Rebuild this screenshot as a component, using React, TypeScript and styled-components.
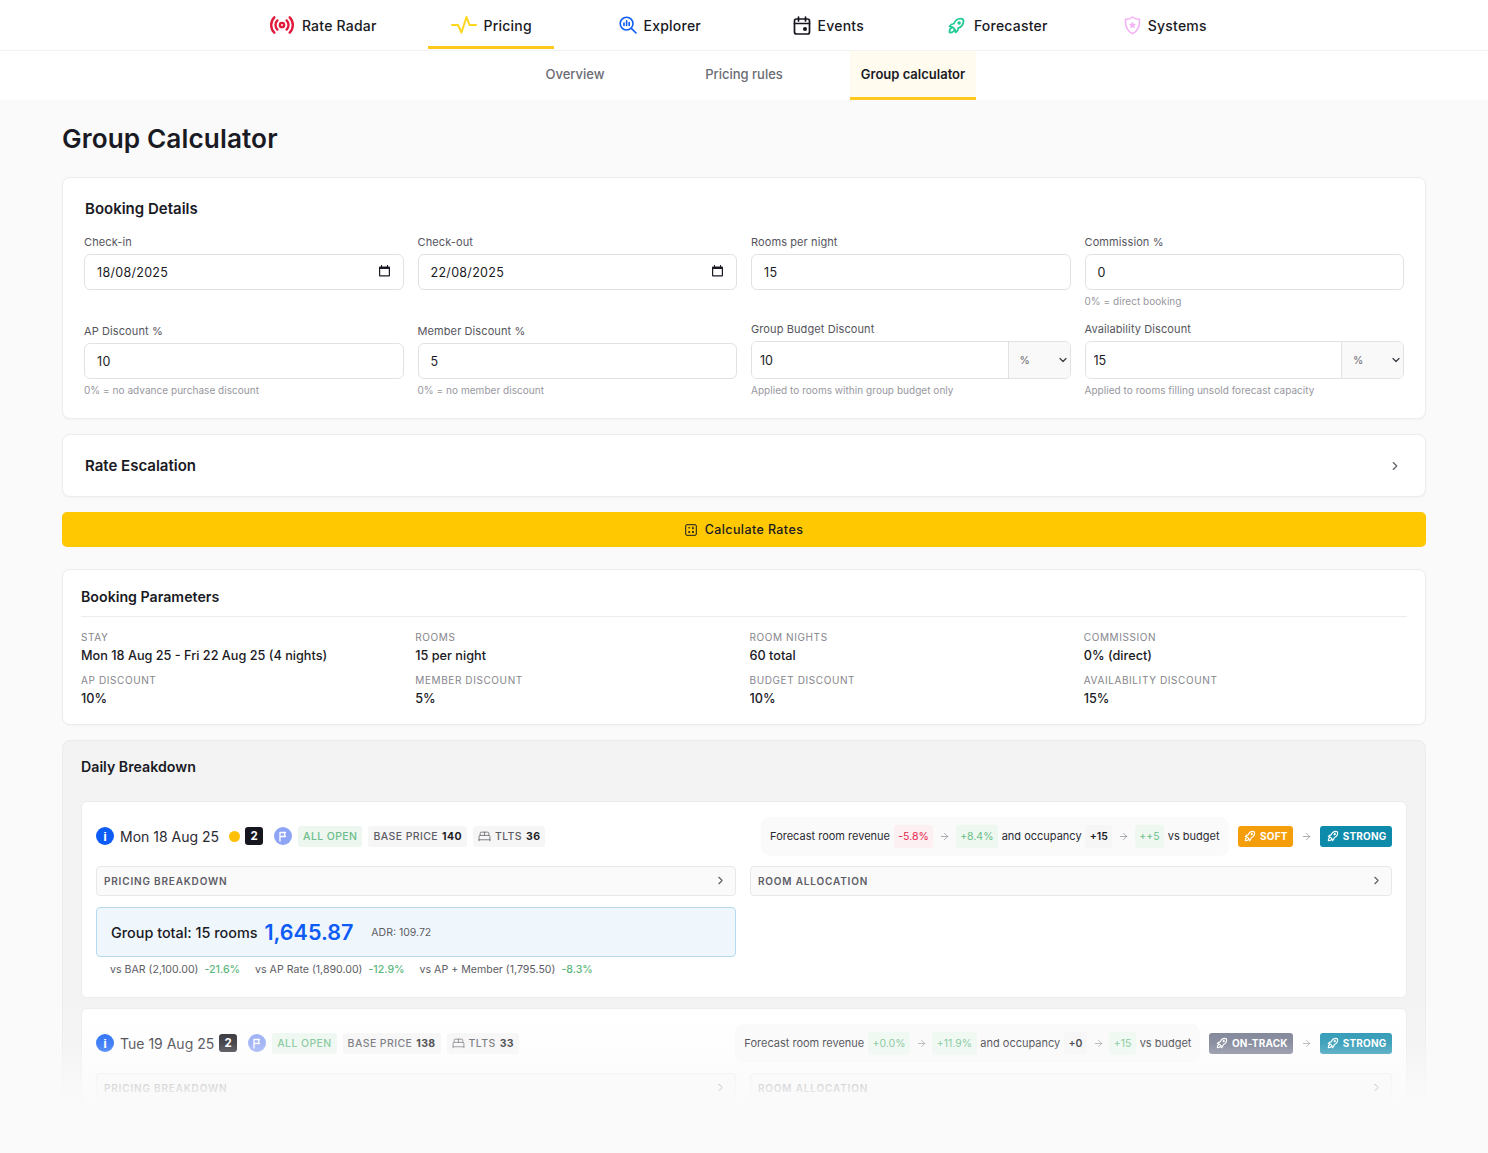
import React from "react";
import styled, { createGlobalStyle } from "styled-components";
import { ChevronRight, ArrowRight, Radio, BedDouble, ChevronDown } from "lucide-react";
import { TbRocket } from "react-icons/tb";

const Global = createGlobalStyle`
  html, body { margin: 0; padding: 0; background: #fafafa; }
  * { box-sizing: border-box; }
  body { font-family: Inter, "Noto Sans", sans-serif; color: #1a1a24; }
`;

const Viewport = styled.div`
  position: relative;
  height: 1153px;
  overflow: hidden;
  background: #fafafa;
`;
const Clip = styled.div`
  position: relative;
  height: 1105px;
  overflow: hidden;
`;
const Fade = styled.div`
  position: absolute;
  left: 0;
  right: 0;
  bottom: 0;
  height: 105px;
  background: linear-gradient(to bottom, rgba(250,250,250,0), rgba(250,250,250,0.22) 41%, rgba(250,250,250,0.82) 84%, #fafafa 100%);
  pointer-events: none;
`;

const TopNav = styled.nav`
  height: 51px;
  background: #fff;
  border-bottom: 1px solid #f3f3f3;
  display: flex;
  justify-content: center;
`;
const TopCell = styled.div`
  width: 168.5px;
  display: flex;
  justify-content: center;
`;
const TopLink = styled.a<{ $active?: boolean }>`
  height: 49px;
  padding: 4px 22.5px 0;
  display: flex;
  align-items: center;
  gap: 7px;
  font-size: 14px;
  font-weight: 500;
  letter-spacing: 0.22px;
  white-space: nowrap;
  color: #1a1a24;
  border-bottom: 3px solid ${(p) => (p.$active ? "#ffc81e" : "transparent")};
`;
const SubNav = styled.nav`
  height: 49px;
  background: #fff;
  display: flex;
  justify-content: center;
`;
const SubCell = styled.div`
  width: 169px;
  display: flex;
  justify-content: center;
`;
const SubLink = styled.a<{ $active?: boolean }>`
  height: 49px;
  padding: 0 10.5px;
  display: flex;
  align-items: center;
  font-size: 13px;
  font-weight: ${(p) => (p.$active ? 600 : 500)};
  white-space: nowrap;
  color: ${(p) => (p.$active ? "#1a1a24" : "#6b6b73")};
  background: ${(p) => (p.$active ? "#fffbee" : "transparent")};
  border-bottom: 3px solid ${(p) => (p.$active ? "#ffc81e" : "transparent")};
`;

const Main = styled.main`
  padding: 22px 62px 0;
`;
const Title = styled.h1`
  margin: 0 0 21px;
  font-size: 26.2px;
  line-height: 34px;
  font-weight: 600;
  letter-spacing: 0.1px;
  color: #1a1a24;
`;
const Card = styled.section`
  background: #fff;
  border: 1px solid #ececee;
  border-radius: 8px;
  box-shadow: 0 1px 2px rgba(0,0,0,0.03);
`;
const DetailsCard = styled(Card)`
  height: 242px;
  padding: 22px 21px 0;
`;
const CardTitle = styled.h2`
  margin: 0 0 0 1px;
  font-size: 15px;
  line-height: 17px;
  font-weight: 600;
  color: #1a1a24;
`;
const SectionTitle = styled.h3`
  margin: 0;
  font-size: 14.2px;
  line-height: 17px;
  font-weight: 600;
  color: #1a1a24;
`;
const FormGrid = styled.div`
  margin-top: 18px;
  display: grid;
  grid-template-columns: repeat(4, 1fr);
  column-gap: 14px;
`;
const Field = styled.div<{ $tall?: boolean }>`
  height: ${(p) => (p.$tall ? "75px" : "80px")};
  display: flex;
  flex-direction: column;
  margin-top: ${(p) => (p.$tall ? "9px" : "0")};
`;
const FieldB = styled(Field)`
  height: 77px;
  margin-top: 7px;
`;
const Label = styled.label`
  font-size: 11px;
  line-height: 14px;
  font-weight: 400;
  letter-spacing: 0.1px;
  color: #55555d;
  margin-bottom: 5px;
  white-space: nowrap;
`;
const InputWrap = styled.div`
  position: relative;
  height: 36px;
`;
const Input = styled.input`
  width: 100%;
  height: 36px;
  padding: 0 12px;
  border: 1px solid #e2e2e6;
  border-radius: 6px;
  background: #fff;
  font: 400 12.5px Inter, sans-serif;
  color: #1a1a24;
  letter-spacing: 0.3px;
  outline: none;
`;
const CalendarSlot = styled.span`
  position: absolute;
  right: 14px;
  top: 11px;
  display: flex;
`;
const Hint = styled.div`
  margin-top: 5px;
  font-size: 10px;
  line-height: 13px;
  letter-spacing: 0.04px;
  color: #97979e;
  white-space: nowrap;
`;
const Group = styled.div`
  height: 38px;
  display: flex;
  border: 1px solid #e2e2e6;
  border-radius: 6px;
  overflow: hidden;
  background: #fff;
`;
const GroupInput = styled.input`
  flex: 1;
  min-width: 0;
  border: 0;
  padding: 0 8px;
  font: 400 12.5px Inter, sans-serif;
  color: #1a1a24;
  outline: none;
`;
const Unit = styled.div`
  width: 62px;
  border-left: 1px solid #e2e2e6;
  background: #f9f9fa;
  display: flex;
  align-items: center;
  justify-content: space-between;
  padding: 0 1px 0 11px;
  font-size: 10.5px;
  color: #6b6b73;
`;
const EscalationCard = styled(Card)`
  margin-top: 15px;
  height: 63px;
  padding: 0 23px 0 21px;
  display: flex;
  align-items: center;
  justify-content: space-between;
`;
const CalcButton = styled.button`
  margin-top: 15px;
  width: 100%;
  height: 35px;
  border: 0;
  border-radius: 5px;
  background: #ffc800;
  display: flex;
  align-items: center;
  justify-content: center;
  gap: 8px;
  font: 500 12.5px Inter, sans-serif;
  letter-spacing: 0.4px;
  color: #1a1a24;
`;
const ParamsCard = styled(Card)`
  margin-top: 22px;
  height: 156px;
  padding: 18px 18px 0;
`;
const ParamsHead = styled.div`
  height: 29px;
  border-bottom: 1px solid #ececee;
`;
const ParamsGrid = styled.div`
  margin-top: 14px;
  display: grid;
  grid-template-columns: repeat(4, 1fr);
  column-gap: 11px;
  row-gap: 10px;
`;
const ParamLabel = styled.div`
  font-size: 10px;
  line-height: 13px;
  letter-spacing: 0.6px;
  color: #85858c;
  text-transform: uppercase;
`;
const ParamValue = styled.div`
  margin-top: 3px;
  font-size: 12.7px;
  line-height: 17px;
  font-weight: 500;
  color: #1a1a24;
`;
const BreakdownPanel = styled.section`
  margin-top: 15px;
  background: #f3f3f4;
  border: 1px solid #ececee;
  border-radius: 8px;
  padding: 17px 18px 0;
  height: 500px;
`;
const DayList = styled.div`
  margin-top: 26px;
  display: flex;
  flex-direction: column;
  gap: 10px;
`;
const DayCard = styled.article`
  background: #fff;
  border: 1px solid #ececee;
  border-radius: 6px;
  padding: 14px 14px 21px;
`;
const DayHead = styled.div`
  height: 40px;
  display: flex;
  align-items: center;
  justify-content: space-between;
`;
const DayLeft = styled.div`
  display: flex;
  align-items: center;
`;
const DayRight = styled.div`
  display: flex;
  align-items: center;
`;
const InfoDot = styled.span`
  width: 18px;
  height: 18px;
  border-radius: 50%;
  background: #0d5cf5;
  color: #fff;
  display: flex;
  align-items: center;
  justify-content: center;
  font: 700 13px "Liberation Sans", sans-serif;
`;
const DayDate = styled.span`
  margin-left: 6px;
  font-size: 14px;
  color: #2a2a32;
  white-space: nowrap;
`;
const StatusDot = styled.span`
  margin-left: 10px;
  width: 11px;
  height: 11px;
  border-radius: 50%;
  background: #ffc107;
`;
const CountBadge = styled.span`
  margin-left: 5px;
  width: 18px;
  height: 18px;
  border-radius: 3px;
  background: #16161e;
  color: #fff;
  display: flex;
  align-items: center;
  justify-content: center;
  font-size: 11.5px;
  font-weight: 700;
`;
const FlagDot = styled.span`
  margin-left: 11px;
  width: 18px;
  height: 18px;
  border-radius: 50%;
  background: #8ea4f5;
  display: flex;
  align-items: center;
  justify-content: center;
`;
const Pill = styled.span<{ $tone: "green" | "gray" }>`
  margin-left: 6px;
  height: 21px;
  padding: 0 5px;
  border-radius: 3px;
  display: flex;
  align-items: center;
  gap: 4px;
  font-size: 10.5px;
  font-weight: 500;
  letter-spacing: 0.4px;
  white-space: nowrap;
  color: ${(p) => (p.$tone === "green" ? "#6cbd89" : "#5d5d65")};
  background: ${(p) => (p.$tone === "green" ? "#edf7f0" : "#f6f6f7")};
  b { font-weight: 700; color: #1f1f27; }
`;
const Forecast = styled.div`
  height: 39px;
  margin-right: 9px;
  padding: 0 9px;
  border-radius: 9px;
  background: #fafafb;
  display: flex;
  align-items: center;
  font-size: 11px;
  color: #2a2a32;
  white-space: nowrap;
`;
const Delta = styled.span<{ $tone: "red" | "green" | "dark" }>`
  margin: 0 3.7px;
  height: 23px;
  padding: 0 4.5px;
  border-radius: 3px;
  display: flex;
  align-items: center;
  font-size: 10.5px;
  font-weight: ${(p) => (p.$tone === "dark" ? 600 : 400)};
  color: ${(p) => (p.$tone === "red" ? "#e5264d" : p.$tone === "green" ? "#6cbd89" : "#1a1a24")};
  background: ${(p) => (p.$tone === "red" ? "#fdf0f2" : p.$tone === "green" ? "#eef8f1" : "#f6f6f7")};
`;
const Arrow = styled.span`
  margin: 0 2px;
  color: #8f8f97;
  display: flex;
`;
const Strength = styled.span<{ $bg: string }>`
  height: 21px;
  padding: 0 5.5px;
  border-radius: 3px;
  display: flex;
  align-items: center;
  gap: 3px;
  font-size: 10px;
  font-weight: 700;
  letter-spacing: 0.2px;
  white-space: nowrap;
  color: #fff;
  background: ${(p) => p.$bg};
`;
const BetweenArrow = styled.span`
  margin: 0 8px;
  color: #8f8f97;
  display: flex;
`;
const Columns = styled.div`
  display: grid;
  grid-template-columns: 640px 642px;
  column-gap: 14px;
`;
const CollapseColumns = styled(Columns)`
  margin-top: 10px;
`;
const Collapse = styled.div`
  height: 29.5px;
  padding: 0 8px 0 7px;
  border: 1px solid #e8e8ea;
  border-radius: 4px;
  background: #fafafb;
  display: flex;
  align-items: center;
  justify-content: space-between;
  font-size: 10px;
  font-weight: 600;
  letter-spacing: 0.82px;
  color: #5d5d65;
`;
const TotalBox = styled.div`
  margin-top: 11.5px;
  height: 50px;
  padding: 0 14px;
  border: 1px solid #b8daf0;
  border-radius: 4px;
  background: #eff6fc;
  display: flex;
  align-items: center;
`;
const TotalLabel = styled.span`
  font-size: 14.4px;
  font-weight: 500;
  color: #1a1a24;
`;
const TotalValue = styled.span`
  margin-left: 7px;
  font-size: 21.5px;
  font-weight: 600;
  color: #0d5cf5;
`;
const Adr = styled.span`
  margin-left: 18px;
  font-size: 10.5px;
  color: #5d5d65;
`;
const Comparisons = styled.div`
  margin-top: 6px;
  padding-left: 14px;
  display: flex;
  gap: 15px;
  font-size: 10.6px;
  line-height: 13px;
  color: #5d5d65;
  white-space: nowrap;
  b { margin-left: 6px; font-weight: 500; color: #5cb67c; }
`;

const RadarIcon = () => <Radio size={26} color="#e01b3c" strokeWidth={2.2} />;
const PulseIcon = () => (
  <svg width="26" height="20" viewBox="0 0 26 20" fill="none" stroke="#ffd61e" strokeWidth="2" strokeLinecap="round" strokeLinejoin="round">
    <path d="M1 10h6l3.5 7.5L15.5 2l3 8H25" />
  </svg>
);
const ExplorerIcon = () => (
  <svg width="18" height="18" viewBox="0 0 18 18" fill="none" stroke="#0d5cf5" strokeWidth="1.6" strokeLinecap="round">
    <circle cx="7.6" cy="7.6" r="6.4" />
    <path d="M12.4 12.4 17 17M5 9.5V7M7.6 9.5V4.8M10.2 9.5V6.5" />
  </svg>
);
const EventsIcon = () => (
  <svg width="18" height="19" viewBox="0 0 18 19" fill="none" stroke="#16161e" strokeWidth="1.7" strokeLinecap="round" strokeLinejoin="round">
    <rect x="1.5" y="3" width="15" height="15" rx="2" />
    <path d="M5.5 1v4M12.5 1v4M1.5 7.5h15" />
    <circle cx="12" cy="13" r="1.2" fill="#16161e" />
  </svg>
);
const ShieldIcon = () => (
  <svg width="17" height="19" viewBox="0 0 17 19" fill="none" stroke="#f3b3f5" strokeWidth="1.6" strokeLinejoin="round">
    <path d="M8.5 1c2 1.6 4.6 2.4 7 2.4.4 6.8-1.8 11.8-7 14.4C3.3 15.2 1.1 10.2 1.5 3.4 3.9 3.4 6.5 2.6 8.5 1Z" />
    <path d="m8.5 6 1 2 2.1.3-1.5 1.5.4 2.1-2-1-2 1 .4-2.1-1.5-1.5 2.1-.3Z" fill="#f3b3f5" strokeWidth="0.5" />
  </svg>
);
const CalendarIcon = () => (
  <svg width="11" height="12" viewBox="0 0 11 12" fill="#1a1a24">
    <path d="M2 0h1v1.5h5V0h1v1.5h1A1 1 0 0 1 11 2.5v8a1 1 0 0 1-1 1H1a1 1 0 0 1-1-1v-8a1 1 0 0 1 1-1h1ZM1.2 4v6.3h8.600V4Z" />
  </svg>
);
const CalcIcon = () => (
  <svg width="12" height="12" viewBox="0 0 12 12" fill="none" stroke="#1a1a24" strokeWidth="1">
    <rect x="0.7" y="0.7" width="10.6" height="10.6" rx="1.2" />
    <path d="M3.2 3.8h2M7 3.2h1.8M7 4.6h1.8M3.2 8h2M4.2 7v2M7 7.2l1.8 1.6M8.8 7.2 7 8.8" />
  </svg>
);
const FlagIcon = () => (
  <svg width="10" height="11" viewBox="0 0 10 11" fill="none" stroke="#fff" strokeWidth="1.3" strokeLinecap="round" strokeLinejoin="round">
    <path d="M2 10V1.5h5.5L6.3 3.5 7.5 5.5H2" />
  </svg>
);

const topItems = [
  { label: "Rate Radar", icon: <RadarIcon /> },
  { label: "Pricing", icon: <PulseIcon />, active: true },
  { label: "Explorer", icon: <ExplorerIcon /> },
  { label: "Events", icon: <EventsIcon /> },
  { label: "Forecaster", icon: <TbRocket size={21} color="#1ec994" /> },
  { label: "Systems", icon: <ShieldIcon /> },
];
const subItems = [
  { label: "Overview" },
  { label: "Pricing rules" },
  { label: "Group calculator", active: true },
];
const params = [
  ["Stay", "Mon 18 Aug 25 - Fri 22 Aug 25 (4 nights)"],
  ["Rooms", "15 per night"],
  ["Room nights", "60 total"],
  ["Commission", "0% (direct)"],
  ["AP discount", "10%"],
  ["Member discount", "5%"],
  ["Budget discount", "10%"],
  ["Availability discount", "15%"],
];

type Tone = "red" | "green" | "dark";
interface DayProps {
  date: string;
  dot?: boolean;
  base: string;
  tlts: string;
  rev: [string, Tone, string, Tone];
  occ: [string, Tone, string, Tone];
  from: [string, string];
}

const SmallArrow = () => <ArrowRight size={11} strokeWidth={1.6} />;

const DayHeader = ({ date, dot, base, tlts, rev, occ, from }: DayProps) => (
  <DayHead>
    <DayLeft>
      <InfoDot>i</InfoDot>
      <DayDate>{date}</DayDate>
      {dot && <StatusDot />}
      <CountBadge>2</CountBadge>
      <FlagDot><FlagIcon /></FlagDot>
      <Pill $tone="green">ALL OPEN</Pill>
      <Pill $tone="gray">BASE PRICE <b>{base}</b></Pill>
      <Pill $tone="gray"><BedDouble size={13} strokeWidth={1.4} /> TLTS <b>{tlts}</b></Pill>
    </DayLeft>
    <DayRight>
      <Forecast>
        Forecast room revenue
        <Delta $tone={rev[1]}>{rev[0]}</Delta>
        <Arrow><SmallArrow /></Arrow>
        <Delta $tone={rev[3]}>{rev[2]}</Delta>
        and occupancy
        <Delta $tone={occ[1]}>{occ[0]}</Delta>
        <Arrow><SmallArrow /></Arrow>
        <Delta $tone={occ[3]}>{occ[2]}</Delta>
        vs budget
      </Forecast>
      <Strength $bg={from[1]}><TbRocket size={14} color="#fff" />{from[0]}</Strength>
      <BetweenArrow><SmallArrow /></BetweenArrow>
      <Strength $bg="#0e8aab"><TbRocket size={14} color="#fff" />STRONG</Strength>
    </DayRight>
  </DayHead>
);

const CollapseRows = () => (
  <CollapseColumns>
    <Collapse>PRICING BREAKDOWN<ChevronRight size={13} color="#5d5d65" /></Collapse>
    <Collapse>ROOM ALLOCATION<ChevronRight size={13} color="#5d5d65" /></Collapse>
  </CollapseColumns>
);

export default function App() {
  return (
    <Viewport>
      <Global />
      <Clip>
        <TopNav>
          {topItems.map((t) => (
            <TopCell key={t.label}>
              <TopLink $active={t.active}>{t.icon}{t.label}</TopLink>
            </TopCell>
          ))}
        </TopNav>
        <SubNav>
          {subItems.map((s) => (
            <SubCell key={s.label}>
              <SubLink $active={s.active}>{s.label}</SubLink>
            </SubCell>
          ))}
        </SubNav>
        <Main>
          <Title>Group Calculator</Title>
          <DetailsCard>
            <CardTitle>Booking Details</CardTitle>
            <FormGrid>
              <Field>
                <Label>Check-in</Label>
                <InputWrap>
                  <Input readOnly value="18/08/2025" />
                  <CalendarSlot><CalendarIcon /></CalendarSlot>
                </InputWrap>
              </Field>
              <Field>
                <Label>Check-out</Label>
                <InputWrap>
                  <Input readOnly value="22/08/2025" />
                  <CalendarSlot><CalendarIcon /></CalendarSlot>
                </InputWrap>
              </Field>
              <Field>
                <Label>Rooms per night</Label>
                <Input readOnly value="15" />
              </Field>
              <Field>
                <Label>Commission %</Label>
                <Input readOnly value="0" />
                <Hint>0% = direct booking</Hint>
              </Field>
              <Field $tall>
                <Label>AP Discount %</Label>
                <Input readOnly value="10" />
                <Hint>0% = no advance purchase discount</Hint>
              </Field>
              <Field $tall>
                <Label>Member Discount %</Label>
                <Input readOnly value="5" />
                <Hint>0% = no member discount</Hint>
              </Field>
              <FieldB>
                <Label>Group Budget Discount</Label>
                <Group>
                  <GroupInput readOnly value="10" />
                  <Unit>%<ChevronDown size={12} strokeWidth={2.4} color="#3a3a42" /></Unit>
                </Group>
                <Hint>Applied to rooms within group budget only</Hint>
              </FieldB>
              <FieldB>
                <Label>Availability Discount</Label>
                <Group>
                  <GroupInput readOnly value="15" />
                  <Unit>%<ChevronDown size={12} strokeWidth={2.4} color="#3a3a42" /></Unit>
                </Group>
                <Hint>Applied to rooms filling unsold forecast capacity</Hint>
              </FieldB>
            </FormGrid>
          </DetailsCard>

          <EscalationCard>
            <CardTitle>Rate Escalation</CardTitle>
            <ChevronRight size={14} color="#5d5d65" />
          </EscalationCard>

          <CalcButton><CalcIcon />Calculate Rates</CalcButton>

          <ParamsCard>
            <ParamsHead>
              <SectionTitle>Booking Parameters</SectionTitle>
            </ParamsHead>
            <ParamsGrid>
              {params.map(([k, v]) => (
                <div key={k}>
                  <ParamLabel>{k}</ParamLabel>
                  <ParamValue>{v}</ParamValue>
                </div>
              ))}
            </ParamsGrid>
          </ParamsCard>

          <BreakdownPanel>
            <SectionTitle>Daily Breakdown</SectionTitle>
            <DayList>
              <DayCard>
                <DayHeader
                  date="Mon 18 Aug 25"
                  dot
                  base="140"
                  tlts="36"
                  rev={["-5.8%", "red", "+8.4%", "green"]}
                  occ={["+15", "dark", "++5", "green"]}
                  from={["SOFT", "#f59e0b"]}
                />
                <CollapseRows />
                <Columns>
                  <div>
                    <TotalBox>
                      <TotalLabel>Group total: 15 rooms</TotalLabel>
                      <TotalValue>1,645.87</TotalValue>
                      <Adr>ADR: 109.72</Adr>
                    </TotalBox>
                    <Comparisons>
                      <span>vs BAR (2,100.00)<b>-21.6%</b></span>
                      <span>vs AP Rate (1,890.00)<b>-12.9%</b></span>
                      <span>vs AP + Member (1,795.50)<b>-8.3%</b></span>
                    </Comparisons>
                  </div>
                </Columns>
              </DayCard>
              <DayCard>
                <DayHeader
                  date="Tue 19 Aug 25"
                  base="138"
                  tlts="33"
                  rev={["+0.0%", "green", "+11.9%", "green"]}
                  occ={["+0", "dark", "+15", "green"]}
                  from={["ON-TRACK", "#6c7288"]}
                />
                <CollapseRows />
              </DayCard>
            </DayList>
          </BreakdownPanel>
        </Main>
        <Fade />
      </Clip>
    </Viewport>
  );
}
